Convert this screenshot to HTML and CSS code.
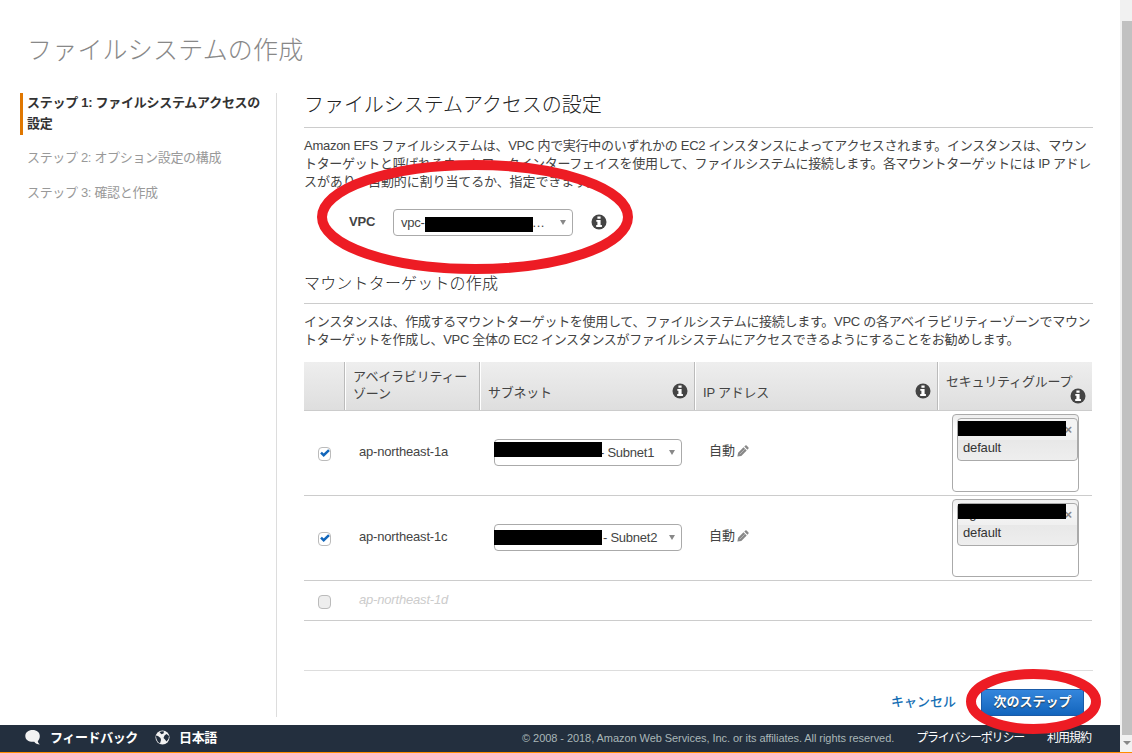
FILE: index.html
```html
<!DOCTYPE html>
<html lang="ja">
<head>
    <meta charset="UTF-8">
    <meta name="viewport" content="width=device-width, initial-scale=1.0">
    <title>ファイルシステムの作成</title>
    <link rel="stylesheet" href="styles.css">
</head>
<body>
    <!-- Shared icons -->
    <svg class="defs" width="0" height="0">
        <symbol id="info" viewBox="0 0 16 16">
            <circle cx="8" cy="8" r="7.5" fill="#444"/>
            <path d="M6.4 2.4h3.2v2.4H6.4zM5.3 6h4.3v5.1h1.3v1.8H5.2v-1.8h1.2V7.8H5.3z" fill="#fff"/>
        </symbol>
        <symbol id="pencil" viewBox="0 0 12 12">
            <path d="M.4 11.6l.7-3.9 5.4-5.4 3.2 3.2-5.400 5.400zM7.300 1.600L8.400.5q.6-.5 1.200 0l1.900 1.900q.5.6 0 1.200l-1.100 1.100z" fill="#888"/>
            <path d="M2.800 9.200l5-5" stroke="#ccc" stroke-width=".7"/>
        </symbol>
        <symbol id="check" viewBox="0 0 10 8">
            <path d="M1 3.6l2.7 2.6L9 1.2" fill="none" stroke="#1166bb" stroke-width="2.5"/>
        </symbol>
    </svg>

    <div class="window">
        <div class="page">
            <h1>ファイルシステムの作成</h1>
            <div class="columns">
                <!-- Wizard steps -->
                <div class="steps">
                    <div class="step active"><div class="step-text">ステップ 1: ファイルシステムアクセスの<br>設定</div></div>
                    <div class="step">ステップ 2: オプション設定の構成</div>
                    <div class="step">ステップ 3: 確認と作成</div>
                </div>

                <div class="content">
                    <h2>ファイルシステムアクセスの設定</h2>
                    <p class="intro"><span class="l1">Amazon EFS ファイルシステムは、VPC 内で実行中のいずれかの EC2 インスタンスによってアクセスされます。インスタンスは、マウン</span><br><span class="l2">トターゲットと呼ばれるネットワークインターフェイスを使用して、ファイルシステムに接続します。各マウントターゲットには IP アドレ</span><br><span class="l3">スがあり、自動的に割り当てるか、指定できます。</span></p>

                    <div class="vpc-row">
                        <label>VPC</label>
                        <div class="select vpc-select">vpc-<span class="redact"></span><span class="dots">...</span><span class="arrow"></span></div>
                        <svg class="info"><use href="#info"/></svg>
                        <svg class="ring ring-vpc"><ellipse cx="158" cy="57" rx="153" ry="52"/></svg>
                    </div>

                    <h3>マウントターゲットの作成</h3>
                    <p class="targets"><span class="l4">インスタンスは、作成するマウントターゲットを使用して、ファイルシステムに接続します。VPC の各アベイラビリティーゾーンでマウン</span><br><span class="l5">トターゲットを作成し、VPC 全体の EC2 インスタンスがファイルシステムにアクセスできるようにすることをお勧めします。</span></p>

                    <div class="table">
                        <div class="tr head">
                            <div class="th"></div>
                            <div class="th">アベイラビリティー<br>ゾーン</div>
                            <div class="th">サブネット<svg class="info"><use href="#info"/></svg></div>
                            <div class="th">IP アドレス<svg class="info"><use href="#info"/></svg></div>
                            <div class="th sg-head">セキュリティグループ<svg class="info"><use href="#info"/></svg></div>
                        </div>
                        <div class="tr">
                            <div class="td"><span class="checkbox"><svg><use href="#check"/></svg></span></div>
                            <div class="td zone">ap-northeast-1a</div>
                            <div class="td"><div class="select subnet"><span class="redact up"></span>- Subnet1<span class="arrow"></span></div></div>
                            <div class="td ip">自動<svg class="pencil"><use href="#pencil"/></svg></div>
                            <div class="td sg"><div class="sg-box"><div class="tag"><span class="redact"></span><span class="tag-id">sg-</span><span class="close">×</span>default</div></div></div>
                        </div>
                        <div class="tr">
                            <div class="td"><span class="checkbox"><svg><use href="#check"/></svg></span></div>
                            <div class="td zone">ap-northeast-1c</div>
                            <div class="td"><div class="select subnet"><span class="redact"></span>- Subnet2<span class="arrow"></span></div></div>
                            <div class="td ip">自動<svg class="pencil"><use href="#pencil"/></svg></div>
                            <div class="td sg"><div class="sg-box"><div class="tag"><span class="redact up"></span><span class="tag-id">sg-</span><span class="close">×</span>default</div></div></div>
                        </div>
                        <div class="tr unavailable">
                            <div class="td"><span class="checkbox"></span></div>
                            <div class="td zone">ap-northeast-1d</div>
                        </div>
                    </div>

                    <div class="actions">
                        <a class="cancel">キャンセル</a>
                        <div class="next">
                            <button class="btn">次のステップ</button>
                            <svg class="ring ring-next"><ellipse cx="67.5" cy="32.5" rx="62.5" ry="27.5"/></svg>
                        </div>
                    </div>
                </div>
            </div>
        </div>

        <!-- Scrollbar -->
        <div class="scrollbar"><div class="thumb"></div><span class="arrow"></span></div>
    </div>

    <div class="footer">
        <svg class="bubble" viewBox="0 0 16 15"><path d="M7.5 0C12 0 14.8 2.5 14.8 6c0 2.5-1 4-2 5 0 1.5 1 2.8 2 3.5-2.5 0-4.300-1-5.500-2.700C4 12.300.3 9.800.3 6 .3 2.500 3.400 0 7.500 0z" fill="#f2f2f2"/></svg>
        <span class="feedback">フィードバック</span>
        <svg class="globe" viewBox="0 0 15 15"><circle cx="7.5" cy="7.5" r="7" fill="#f2f2f2"/><path d="M4.5 2l2.500-.8 2 .3-.5 2-2 .8-1-1zM.8 5.500l2.200.5 2.500 2 .5 2-1 3.500-2-1.500L1.500 9zM9.500 5.500l2-1.500 2.500 2-.5 3-2 2.500-1.500-2-1.500-1.500z" fill="#232f3e"/></svg>
        <span class="lang">日本語</span>
        <span class="copyright">© 2008 - 2018, Amazon Web Services, Inc. or its affiliates. All rights reserved.</span>
        <span class="privacy">プライバシーポリシー</span>
        <span class="terms">利用規約</span>
    </div>
    <div class="strip"></div>
</body>
</html>
```
FILE: styles.css
```css
* { box-sizing: border-box; }
body {
    margin: 0;
    width: 1132px;
    height: 753px;
    overflow: hidden;
    background: #fff;
    color: #444;
    font-family: "Liberation Sans", "Noto Sans CJK JP", sans-serif;
    font-size: 13px;
    line-height: 18px;
    white-space: nowrap;
}
h1, h2, h3, p { margin: 0; font-weight: normal; }
svg { display: block; }
.defs { position: absolute; }
.window { display: flex; height: 725px; }
.page { width: 1120px; padding: 30px 27px 0 20px; }
h1 {
    height: 62px;
    padding-left: 7px;
    font-size: 25px;
    line-height: 40px;
    color: #888;
    font-weight: 300;
    letter-spacing: 0.2px;
}
.columns { display: flex; }

/* Wizard steps */
.steps {
    width: 257px;
    height: 624px;
    margin-top: 1px;
    border-right: 1px solid #ddd;
    color: #999;
}
.step {
    height: 21px;
    margin-bottom: 14px;
    padding-left: 7px;
    line-height: 21px;
    letter-spacing: -0.33px;
}
.step.active {
    display: flex;
    height: 42px;
    margin-bottom: 12px;
    padding-left: 4px;
    border-left: 3px solid #e07700;
    color: #333;
    font-weight: bold;
    letter-spacing: -0.27px;
}
.step-text { margin-top: -1px; }

.content { width: 789px; margin-left: 27px; }
h2 {
    height: 36px;
    border-bottom: 1px solid #ccc;
    font-size: 20px;
    line-height: 26px;
    letter-spacing: -0.05px;
    font-weight: 300;
    color: #222;
}
.intro { padding-top: 9px; height: 81px; }

/* Line-by-line tracking */
.l1 { letter-spacing: -0.27px; }
.l2 { letter-spacing: -0.33px; }
.l3 { letter-spacing: -0.1px; }
.l4 { letter-spacing: -0.29px; }
.l5 { letter-spacing: -0.34px; }

.vpc-row {
    position: relative;
    display: flex;
    align-items: center;
    height: 27px;
    padding-left: 45px;
}
.vpc-row label { width: 44px; margin-bottom: 2px; font-weight: bold; letter-spacing: -0.2px; }
.vpc-row .info { margin-bottom: 2px; }
.select {
    display: flex;
    align-items: center;
    height: 27px;
    border: 1px solid #aaa;
    border-radius: 4px;
    background: #fff;
}
.vpc-select { width: 180px; padding: 0 6px 0 7px; margin-right: 18px; letter-spacing: -0.25px; }
.dots { letter-spacing: 0.5px; }
.redact { display: block; flex: none; width: 108px; height: 15px; background: #000; }
.vpc-select .redact { margin-top: 3px; }
.arrow {
    margin-left: auto;
    border: 3px solid transparent;
    border-top: 5px solid #888;
    border-bottom: 0;
}
.info { width: 16px; height: 16px; }
.ring {
    position: absolute;
    z-index: 5;
    fill: none;
    stroke: #ed1c24;
    stroke-width: 10;
}
.ring-vpc { left: 13px; top: -49px; width: 316px; height: 114px; }
h3 {
    height: 68px;
    padding-top: 38px;
    border-bottom: 1px solid #ccc;
    font-size: 16px;
    line-height: 20px;
    letter-spacing: 0.18px;
    font-weight: 300;
    color: #222;
}
.targets { padding-top: 9px; height: 58px; }

/* Mount targets table */
.table { width: 788px; }
.tr {
    display: grid;
    grid-template-columns: 41px 135px 215px 243px 154px;
    height: 85px;
    border-bottom: 1px solid #ccc;
}
.head { height: 49px; background: linear-gradient(#eee, #dedede); }
.th {
    position: relative;
    padding: 6px 0 0 7px;
    border-right: 1px solid #bbb;
    border-left: 1px solid #fff;
    line-height: 17px;
    letter-spacing: -0.22px;
}
.th:first-child { border-left: 0; }
.th:nth-child(3), .th:nth-child(4) { padding-top: 22px; }
.th:last-child { border-right: 0; padding-top: 11px; }
.th .info { position: absolute; right: 6px; top: 21px; }
.th.sg-head .info { top: 26px; }
.td { padding-top: 28px; }
.td:first-child { padding: 36px 0 0 14px; }
.checkbox {
    display: block;
    width: 13px;
    height: 14px;
    border: 1px solid #bbb;
    border-radius: 4px;
}
.checkbox svg { width: 10px; height: 8px; margin: 1px 0 0 1px; }
.td.zone { padding: 32px 0 0 14px; letter-spacing: -0.18px; }
.subnet { width: 188px; margin-left: 14px; padding-right: 6px; letter-spacing: -0.25px; }
.subnet .redact { position: relative; margin: 0 1px 0 -1px; }
.subnet .redact.up { margin: -6px -2px 0 -1px; }
.td.ip { display: flex; padding: 31px 0 0 14px; }
.pencil { width: 12px; height: 12px; margin: 3px 0 0 2px; }
.td.sg { padding: 3px 0 0 14px; }
.sg-box {
    width: 127px;
    height: 78px;
    padding: 3px 0 0 4px;
    border: 1px solid #aaa;
    border-radius: 4px;
    background: linear-gradient(#eee 0, #fff 15px);
}
.tag {
    position: relative;
    width: 121px;
    height: 43px;
    padding: 20px 0 0 5px;
    border: 1px solid #aaa;
    border-radius: 4px;
    background: linear-gradient(#f4f4f4 20%, #f0f0f0 50%, #e8e8e8 52%, #eee);
    color: #333;
    letter-spacing: -0.15px;
}
.tag .redact { position: absolute; left: 0; top: 2px; z-index: 1; }
.tag .redact.up { top: 0; }
.tag-id { position: absolute; left: 5px; top: 1px; }
.close { position: absolute; right: 5px; top: 2px; color: #888; font-weight: bold; }
.unavailable { height: 40px; }
.unavailable .td:first-child { padding-top: 14px; }
.unavailable .checkbox { background: #eee; }
.unavailable .zone { padding-top: 10px; color: #ccc; font-style: italic; }

.actions {
    display: flex;
    justify-content: flex-end;
    margin-top: 49px;
    padding: 18px 9px 0 0;
    border-top: 1px solid #ddd;
}
.cancel { margin: 4px 25px 0 0; color: #146eb4; font-weight: 500; }
.next { position: relative; }
.btn {
    display: block;
    width: 103px;
    height: 27px;
    padding: 0 0 2px;
    border: 1px solid #1a5ba8;
    border-radius: 2px;
    background: linear-gradient(#3486dc, #1365bd);
    color: #fff;
    font: bold 13px/20px "Liberation Sans", "Noto Sans CJK JP", sans-serif;
    text-shadow: 0 1px 1px #234;
}
.ring-next { left: -15px; top: -20px; width: 135px; height: 65px; }

.scrollbar {
    display: flex;
    flex-direction: column;
    align-items: center;
    width: 12px;
    height: 752px;
    padding: 21px 0 0 2px;
    background: #f1f1f1;
}
.thumb { width: 10px; height: 714px; background: #c1c1c1; }
.scrollbar .arrow { margin: 6px 0 0; border-width: 4px 4px 0; }

.footer {
    display: flex;
    align-items: center;
    width: 1120px;
    height: 27px;
    padding: 0 29px 2px 25px;
    background: #232f3e;
    color: #fff;
}
.strip { height: 1px; background: #ff8c00; }
.bubble { width: 16px; height: 15px; }
.feedback { margin-left: 9px; font-weight: bold; letter-spacing: -0.4px; }
.globe { width: 15px; height: 15px; margin-left: 17px; }
.lang { margin-left: 9px; font-weight: bold; letter-spacing: -0.3px; }
.copyright { margin-left: auto; color: #aab7b8; font-size: 11px; letter-spacing: -0.06px; }
.privacy { margin-left: 22px; font-size: 12px; letter-spacing: -1.2px; }
.terms { margin-left: 23px; font-size: 12px; letter-spacing: -1px; }
```
